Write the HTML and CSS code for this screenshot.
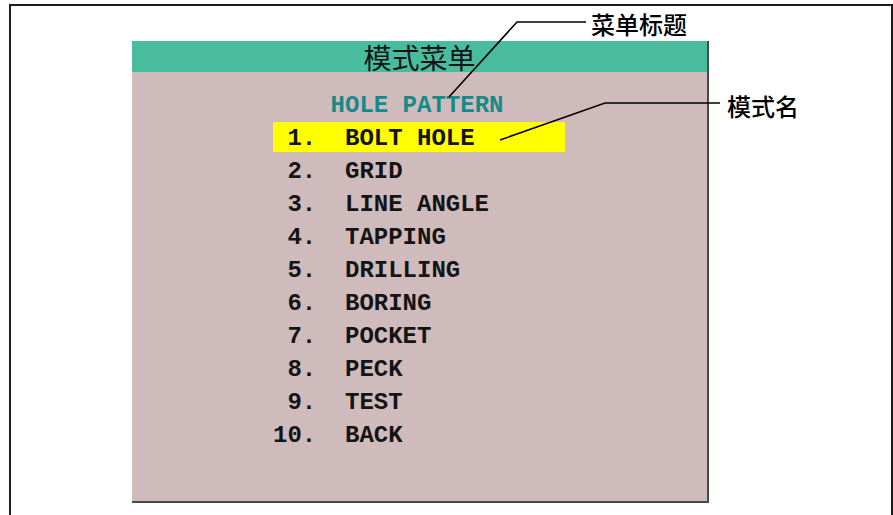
FILE: index.html
```html
<!DOCTYPE html>
<html lang="zh">
<head>
<meta charset="utf-8">
<link rel="stylesheet" href="styles.css">
</head>
<body>
<div class="frame">
  <div class="panel">
    <div class="panel-head">模式菜单</div>
    <div class="panel-body">
      <div class="menu-title">HOLE PATTERN</div>
      <ul class="menu">
        <li class="row active"><span class="num">1.</span><span class="name">BOLT HOLE</span></li>
        <li class="row"><span class="num">2.</span><span class="name">GRID</span></li>
        <li class="row"><span class="num">3.</span><span class="name">LINE ANGLE</span></li>
        <li class="row"><span class="num">4.</span><span class="name">TAPPING</span></li>
        <li class="row"><span class="num">5.</span><span class="name">DRILLING</span></li>
        <li class="row"><span class="num">6.</span><span class="name">BORING</span></li>
        <li class="row"><span class="num">7.</span><span class="name">POCKET</span></li>
        <li class="row"><span class="num">8.</span><span class="name">PECK</span></li>
        <li class="row"><span class="num">9.</span><span class="name">TEST</span></li>
        <li class="row"><span class="num">10.</span><span class="name">BACK</span></li>
      </ul>
    </div>
  </div>
</div>
<div class="label label-title">菜单标题</div>
<div class="label label-name">模式名</div>
<svg class="leaders" width="893" height="515" viewBox="0 0 893 515">
  <polyline points="449,97 517,22 586,22" fill="none" stroke="#000" stroke-width="1.6"/>
  <polyline points="500,140 605,103 720,103" fill="none" stroke="#000" stroke-width="1.6"/>
</svg>
</body>
</html>
```
FILE: styles.css
```css
html, body {
  margin: 0;
  padding: 0;
  background: #ffffff;
  overflow: hidden;
}
body {
  width: 893px;
  height: 515px;
  position: relative;
  font-family: "Liberation Mono", "DejaVu Sans Mono", monospace;
}
.frame {
  box-sizing: border-box;
  margin: 4px 0 0 9px;
  width: 884px;
  height: 520px;
  border: 2px solid #1e1e1e;
  border-bottom: none;
  padding: 35px 0 0 121px;
}
.panel {
  box-sizing: border-box;
  width: 577px;
  height: 462px;
  background: #cfbbbb;
  border-right: 2px solid #4a4a4a;
  border-bottom: 2px solid #4a4a4a;
  display: flex;
  flex-direction: column;
}
.panel-head {
  height: 31px;
  background: #4abc9e;
  display: flex;
  align-items: center;
  justify-content: center;
  font-family: "Noto Sans CJK SC", "Noto Sans CJK JP", sans-serif;
  font-weight: 400;
  font-size: 28px;
  color: #151515;
  line-height: 1;
}
.panel-body {
  padding: 17px 0 0 141px;
  font-family: "Liberation Mono", "DejaVu Sans Mono", monospace;
  font-weight: bold;
  font-size: 24px;
}
.menu-title {
  height: 30px;
  line-height: 33px;
  padding-left: 4ch;
  color: #168a8a;
  margin-bottom: 3px;
}
.menu {
  list-style: none;
  margin: 0;
  padding: 0;
  display: flex;
  flex-direction: column;
  gap: 3px;
}
.row {
  width: 292px;
  height: 30px;
  line-height: 33px;
  display: flex;
  gap: 2ch;
  color: #141414;
}
.row.active {
  background: #ffff00;
}
.num {
  width: 3ch;
  text-align: right;
}
.label {
  position: absolute;
  font-family: "Noto Sans CJK SC", "Noto Sans CJK JP", sans-serif;
  font-weight: 500;
  font-size: 24px;
  line-height: 1;
  color: #000;
}
.label-title {
  left: 591px;
  top: 12px;
}
.label-name {
  left: 727px;
  top: 94px;
}
.leaders {
  position: absolute;
  left: 0;
  top: 0;
  pointer-events: none;
}
```
